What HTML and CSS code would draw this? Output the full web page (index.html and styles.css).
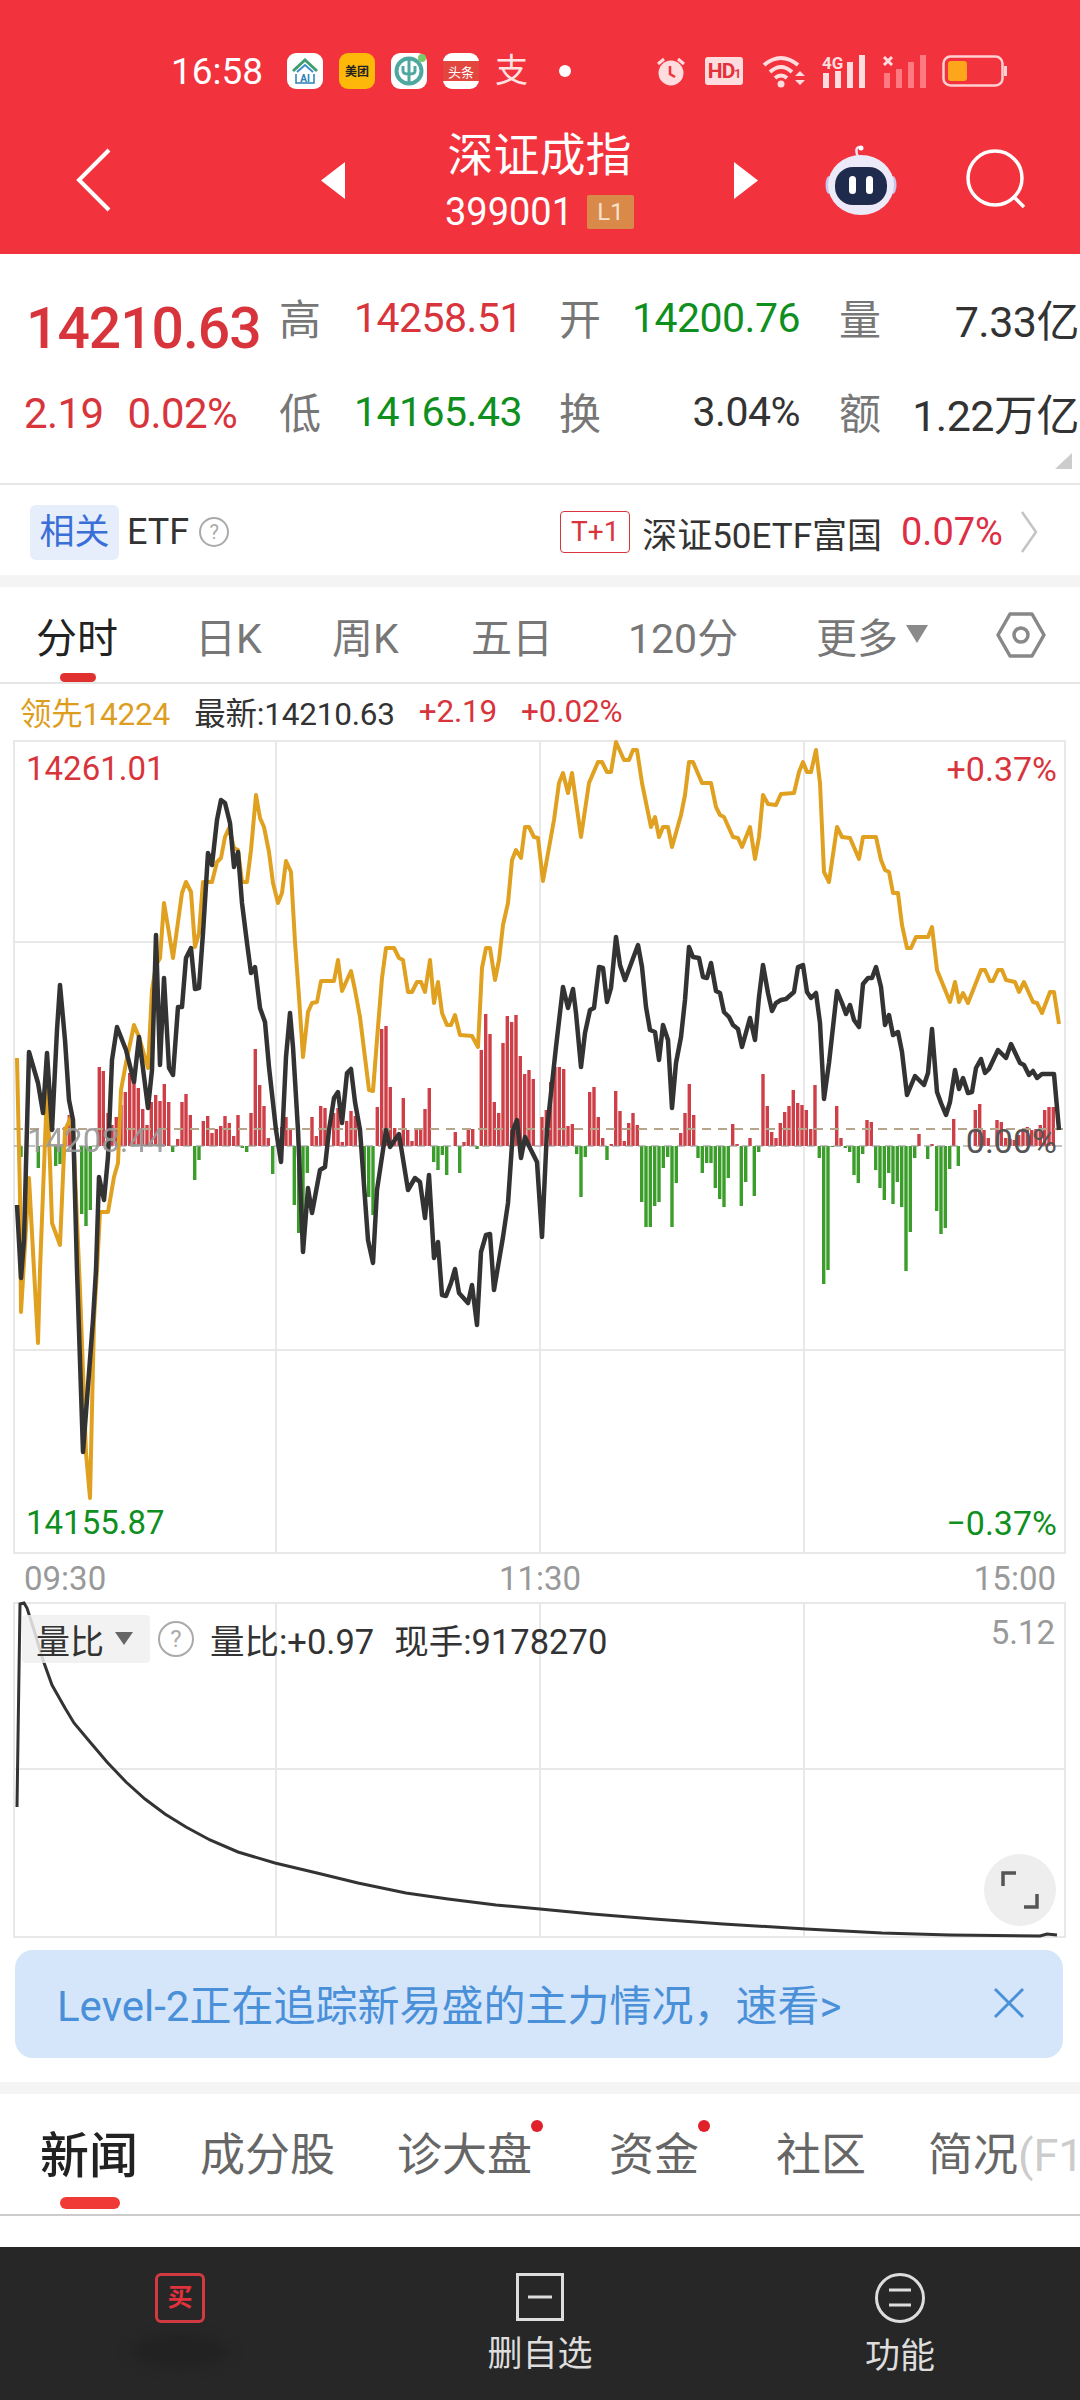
FILE: index.html
```html
<!DOCTYPE html>
<html lang="zh">
<head>
    <meta charset="UTF-8">
    <meta name="viewport" content="width=device-width, initial-scale=1.0">
    <title>深证成指</title>
    <link rel="stylesheet" href="styles.css">
</head>
<body>
    <!-- Cabecera roja -->
    <header class="top">
        <div class="status">
            <span class="clock">16:58</span>
            <div class="apps">
                <svg class="app" viewBox="0 0 36 36"><rect width="36" height="36" rx="9" fill="#fff"/><path d="M6 18 18 7l12 11" fill="none" stroke="#3f9e6e" stroke-width="3"/><path d="M10 19 18 12l8 7" fill="none" stroke="#3a8fc8" stroke-width="2"/><path d="M9 21v9h18v-9" fill="none" stroke="#2a80b8" stroke-width="1.5"/><text x="18" y="29" class="app-ai">AI</text></svg>
                <svg class="app" viewBox="0 0 36 36"><rect width="36" height="36" rx="9" fill="#fdb80a"/><text x="18" y="23" class="app-mt">美团</text></svg>
                <svg class="app" viewBox="0 0 36 36"><rect width="36" height="36" rx="9" fill="#fff"/><circle cx="18" cy="18" r="12.5" fill="none" stroke="#4fa8a0" stroke-width="4"/><path d="M18 6v24M12 13v5q0 3 6 3t6-3v-5" fill="none" stroke="#4fa8a0" stroke-width="3"/><circle cx="31" cy="5" r="4" fill="#7cc96a"/></svg>
                <svg class="app" viewBox="0 0 36 36"><rect width="36" height="36" rx="9" fill="#fff"/><rect y="8" width="36" height="20" fill="#e2473f"/><text x="18" y="24" class="app-tt">头条</text></svg>
                <span class="app-zfb">支</span>
                <i class="dot"></i>
            </div>
            <div class="sys">
                <svg width="32" height="32" viewBox="0 0 32 32"><circle cx="16" cy="18" r="12.5" fill="#ffdcdd"/><path d="M15 11v8l5 3" fill="none" stroke="#f2323c" stroke-width="2.5"/><path d="M3 9l6-5M29 9l-6-5" stroke="#ffdcdd" stroke-width="3"/></svg>
                <span class="hd">HD<small>1</small></span>
                <svg width="46" height="34" viewBox="0 0 46 34"><path d="M2 11Q19-3 36 11M8 18Q19 8 30 18M13 24Q19 19 25 24" fill="none" stroke="#ffdcdd" stroke-width="4"/><circle cx="19" cy="30" r="3.5" fill="#ffdcdd"/><path d="M33 22l5-5 5 5zM33 26l5 5 5-5z" fill="#ffdcdd"/></svg>
                <svg width="46" height="34" viewBox="0 0 46 34"><text x="0" y="15" class="sig-4g">4G</text><path d="M4 19v15M16 17v17M28 8v26M40 1v33" stroke="#ffdcdd" stroke-width="6"/></svg>
                <svg width="46" height="34" viewBox="0 0 46 34"><path d="M2 3l8 8M10 3l-8 8" stroke="#ffdcdd" stroke-width="3"/><path d="M5 19v15M17 15v19M29 8v26M41 1v33" stroke="#ff7a80" stroke-width="6"/></svg>
                <svg width="66" height="32" viewBox="0 0 66 32"><rect x="1.5" y="1.5" width="59" height="29" rx="7" fill="none" stroke="#ffd0d2" stroke-width="2.5"/><rect x="6" y="6" width="19" height="20" rx="3" fill="#fda51b"/><rect x="62" y="11" width="3" height="10" fill="#ffd0d2"/></svg>
            </div>
        </div>
        <nav class="bar">
            <div class="bar-left">
                <svg width="36" height="64" viewBox="0 0 36 64"><path d="M33 2 3 32l30 30" fill="none" stroke="#fff" stroke-width="4"/></svg>
            </div>
            <div class="bar-mid">
                <svg width="24" height="37" viewBox="0 0 24 37"><path d="M24 0v37L0 18.5z" fill="#fff"/></svg>
                <div class="name">
                    <div class="name-cn">深证成指</div>
                    <div class="name-code">399001 <span class="lv">L1</span></div>
                </div>
                <svg width="24" height="37" viewBox="0 0 24 37"><path d="M0 0v37l24-18.5z" fill="#fff"/></svg>
            </div>
            <div class="bar-right">
                <svg width="74" height="70" viewBox="0 0 74 70"><path d="M34 12Q30 2 36 2" fill="none" stroke="#e8e4f6" stroke-width="2.5"/><circle cx="37" cy="3" r="2.5" fill="#fff"/><ellipse cx="5" cy="40" rx="3.5" ry="9" fill="#c9c4ea"/><ellipse cx="69" cy="40" rx="3.5" ry="9" fill="#c9c4ea"/><ellipse cx="37" cy="40" rx="33" ry="30" fill="#ece9f8"/><rect x="11" y="22" width="52" height="38" rx="18" fill="#1f2b4d"/><rect x="25" y="31" width="7" height="18" rx="3.5" fill="#fff"/><rect x="42" y="31" width="7" height="18" rx="3.5" fill="#fff"/></svg>
                <svg width="62" height="62" viewBox="0 0 62 62"><circle cx="29" cy="29" r="27" fill="none" stroke="#fff" stroke-width="3.5"/><path d="M47 47l11 11" stroke="#fff" stroke-width="3.5"/></svg>
            </div>
        </nav>
    </header>

    <!-- Cotizacion -->
    <section class="quote">
        <div class="price up">14210.63</div>
        <div class="stat first"><span class="key">高</span><span class="val up">14258.51</span></div>
        <div class="stat"><span class="key">开</span><span class="val down">14200.76</span></div>
        <div class="stat"><span class="key">量</span><span class="val wide">7.33亿</span></div>
        <div class="change up"><span>2.19</span><span>0.02%</span></div>
        <div class="stat first"><span class="key">低</span><span class="val down">14165.43</span></div>
        <div class="stat"><span class="key">换</span><span class="val">3.04%</span></div>
        <div class="stat"><span class="key">额</span><span class="val wide">1.22万亿</span></div>
        <i class="corner"></i>
    </section>

    <section class="etf">
        <span class="etf-tag">相关</span>
        <span class="etf-name">ETF</span>
        <span class="help">?</span>
        <span class="t1">T+1</span>
        <span class="etf-fund">深证50ETF富国</span>
        <span class="etf-pct">0.07%</span>
        <svg width="18" height="44" viewBox="0 0 18 44"><path d="M2 2l14 20L2 42" fill="none" stroke="#c4c4c4" stroke-width="2.5"/></svg>
    </section>

    <div class="gap"></div>

    <!-- Pestañas del grafico -->
    <section class="periods">
        <span class="period on">分时</span>
        <span class="period p2">日K</span>
        <span class="period p3">周K</span>
        <span class="period p4">五日</span>
        <span class="period p5">120分</span>
        <span class="period p6">更多<i class="tri"></i></span>
        <svg class="hex" width="50" height="46" viewBox="0 0 50 46"><path d="M14 2h22l12 21-12 21H14L2 23z" fill="none" stroke="#888" stroke-width="3.5" stroke-linejoin="round"/><circle cx="25" cy="23" r="7" fill="none" stroke="#888" stroke-width="3.5"/></svg>
    </section>

    <div class="legend">
        <span class="lead">领先14224</span>
        <span class="last">最新:14210.63</span>
        <span class="up">+2.19</span>
        <span class="up">+0.02%</span>
    </div>

    <!-- Grafico de minutos -->
    <div class="chart">
        <svg class="plot" width="1080" height="820" viewBox="0 738 1080 820">
            <path class="grid" d="M14 741H1065V1553H14ZM276 741V1553M540 741V1553M804 741V1553M14 942H1065M14 1350H1065"/>
            <path class="bars-up" d="M65 1127V1146M69.3 1115V1146M73.3 1120V1146M99.3 1067V1146M103.3 1071V1146M108 1113V1146M112 1125V1146M116.3 1117V1146M121 1105V1146M125.3 1092V1146M129.7 1073V1146M134 1080V1146M138.3 1088V1146M142.7 1109V1146M147 1125V1146M151.3 1102V1146M155.7 1095V1146M160 1101V1146M164.3 1084V1146M168.7 1102V1146M177.7 1139V1146M182 1102V1146M186 1094V1146M190.3 1115V1146M203.3 1121V1146M207.7 1116V1146M212 1133V1146M216.3 1129V1146M220.7 1126V1146M225 1116V1146M229.3 1123V1146M233.7 1136V1146M238 1115V1146M251 1113V1146M255.3 1049V1146M259.7 1085V1146M264 1106V1146M268.3 1138V1146M281.7 1127V1146M286 1117V1146M290.3 1130V1146M312 1117V1146M316.3 1136V1146M320.7 1106V1146M325 1108V1146M333.7 1113V1146M338 1108V1146M342.3 1142V1146M346.7 1121V1146M351 1111V1146M355.3 1116V1146M377.3 1107V1146M381.7 1029V1146M386 1026V1146M390.3 1087V1146M394.7 1128V1146M399 1133V1146M403.3 1098V1146M407.7 1130V1146M412 1141V1146M416.3 1130V1146M420.7 1128V1146M425 1109V1146M429.3 1088V1146M455.3 1132V1146M464 1142V1146M468.3 1129V1146M472.7 1129V1146M481.3 1050V1146M485.7 1014V1146M490 1034V1146M494.3 1102V1146M498.7 1113V1146M503 1043V1146M507.3 1016V1146M511.7 1022V1146M516 1015V1146M520.3 1056V1146M524.7 1074V1146M529 1070V1146M533.3 1079V1146M542 1117V1146M546.3 1110V1146M550.7 1082V1146M555 1067V1146M559.3 1067V1146M563.7 1069V1146M568 1126V1146M572.3 1124V1146M589.7 1092V1146M594 1087V1146M598.3 1117V1146M602.7 1138V1146M611.3 1144V1146M615.7 1091V1146M620 1111V1146M624.3 1141V1146M628.7 1123V1146M633 1113V1146M637.3 1125V1146M680.7 1133V1146M685 1113V1146M689.3 1084V1146M693.7 1115V1146M732.7 1124V1146M737 1144V1146M750 1138V1146M763 1074V1146M767.3 1106V1146M771.7 1132V1146M776 1138V1146M780.3 1123V1146M784.7 1112V1146M789 1106V1146M793.3 1090V1146M797.7 1103V1146M802 1105V1146M806.3 1110V1146M810.7 1129V1146M815 1085V1146M836.7 1106V1146M841 1138V1146M867 1120V1146M871.3 1122V1146M919 1134V1146M932 1144V1146M953.7 1119V1146M975.3 1110V1146M979.7 1104V1146M984 1130V1146M988.3 1138V1146M997 1120V1146M1001.3 1122V1146M1005.7 1138V1146M1010 1139V1146M1014.3 1140V1146M1018.7 1135V1146M1023 1130V1146M1027.3 1127V1146M1031.7 1130V1146M1036 1129V1146M1040.3 1125V1146M1044.7 1110V1146M1049 1107V1146M1053.3 1107V1146"/>
            <path class="bars-down" d="M21 1146V1157M38.3 1146V1168M55.7 1146V1166M60 1146V1164M64.3 1146V1155M81.7 1146V1214M86 1146V1226M90.3 1146V1210M172.7 1146V1152M194.7 1146V1180M199 1146V1160M242.3 1146V1148M246.7 1146V1152M272.7 1146V1174M294.3 1146V1205M298.7 1146V1233M303 1146V1253M307.3 1146V1173M364.3 1146V1180M368.7 1146V1197M373 1146V1215M433.7 1146V1162M438 1146V1170M442.3 1146V1155M446.7 1146V1175M459.7 1146V1173M477 1146V1149M576.7 1146V1154M581 1146V1197M585.3 1146V1157M607 1146V1160M641.7 1146V1202M646 1146V1227M650.3 1146V1227M654.7 1146V1206M659 1146V1202M663.3 1146V1168M667.7 1146V1157M672 1146V1227M676.3 1146V1183M698 1146V1158M702.3 1146V1173M706.7 1146V1163M711 1146V1163M715.3 1146V1188M719.7 1146V1199M724 1146V1207M728.3 1146V1178M741.3 1146V1206M745.7 1146V1182M754.3 1146V1196M758.7 1146V1152M819.3 1146V1158M823.7 1146V1284M828 1146V1270M832.3 1146V1147M845.3 1146V1148M849.7 1146V1152M854 1146V1175M858.3 1146V1183M862.7 1146V1154M875.7 1146V1170M880 1146V1188M884.3 1146V1200M888.7 1146V1173M893 1146V1204M897.3 1146V1182M901.7 1146V1207M906 1146V1271M910.3 1146V1232M914.7 1146V1158M927.7 1146V1159M936.7 1146V1211M941 1146V1234M945.3 1146V1228M949.7 1146V1169M958.3 1146V1166"/>
            <path class="axis" d="M14 1146H1065"/>
            <path class="base" d="M14 1129H1065"/>
            <polyline class="line-lead" points="17,1058 20,1197 21,1312 29,1178 38,1343 40,1270 47,1090 50,1163 52,1223 60,1245 65,1130 71,1117 74,1150 80,1290 86,1453 90,1498 94,1320 97,1270 100,1212 108,1212 114,1177 118,1163 121,1090 126,1063 134,1025 139,1037 148,1068 152,990 156,965 160,958 164,903 169,933 173,958 182,893 186,882 191,892 195,947 199,933 203,882 212,882 217,862 221,858 225,837 229,828 234,848 238,850 242,882 247,882 251,850 256,795 260,818 264,827 269,852 273,883 278,903 282,893 286,861 291,872 295,942 299,997 303,1057 308,1012 312,1003 317,1002 321,981 334,981 338,960 342,991 351,971 355,990 360,1017 369,1090 373,1091 378,1027 382,978 386,948 394,948 399,958 403,960 408,992 412,992 417,982 421,982 425,992 430,960 434,1003 438,982 442,1013 447,1025 451,1025 455,1015 460,1035 472,1036 478,1047 482,968 486,948 490,948 495,980 499,960 503,925 508,903 512,860 516,850 521,858 525,827 529,827 534,837 538,838 543,881 554,820 559,783 563,773 568,793 572,773 581,837 589,783 598,762 602,762 607,772 611,772 616,742 624,760 629,760 633,750 637,750 642,783 651,827 655,817 659,837 663,827 668,827 672,847 681,815 685,795 689,762 693,762 702,783 711,783 716,807 720,815 724,817 733,837 738,838 742,847 750,827 755,859 759,837 763,795 768,804 776,805 781,794 794,793 799,772 803,762 807,772 811,772 816,750 820,783 824,872 829,882 837,827 842,837 850,838 859,859 863,837 876,837 881,860 885,870 889,872 893,893 898,893 902,925 907,948 911,948 916,937 928,937 932,927 937,970 950,1002 955,982 959,1002 963,993 968,1003 981,970 985,970 990,981 993,981 998,970 1002,970 1006,980 1015,982 1019,992 1024,982 1033,1002 1037,1003 1042,1013 1050,992 1054,992 1059,1024"/>
            <polyline class="line-price" points="17,1205 21,1278 24,1240 29,1052 38,1083 43,1113 47,1053 52,1130 57,1030 60,985 65,1040 69,1100 73,1120 77,1270 83,1452 93,1320 96,1270 99,1177 104,1200 108,1157 112,1060 117,1027 126,1050 134,1082 139,1037 148,1108 152,1070 156,935 160,1065 164,978 169,1068 173,1075 178,1007 182,1007 186,958 191,948 195,989 199,988 203,933 208,853 212,865 217,820 221,800 225,803 230,823 234,867 238,852 242,903 247,943 251,973 255,967 260,1008 265,1022 269,1067 276,1130 281,1162 286,1057 290,1013 293,1047 298,1130 303,1252 308,1188 312,1213 320,1170 325,1167 329,1130 334,1098 338,1092 342,1123 347,1073 351,1069 355,1102 360,1130 368,1240 373,1263 377,1190 386,1130 390,1147 399,1134 408,1190 415,1178 420,1182 425,1218 429,1175 434,1258 438,1242 442,1295 446,1296 451,1283 455,1269 459,1293 468,1303 472,1285 477,1325 481,1252 486,1235 490,1234 494,1290 503,1237 508,1203 513,1130 517,1120 521,1158 525,1137 530,1148 537,1162 542,1237 547,1130 556,1047 563,987 568,1008 573,989 576,1013 581,1067 585,1033 590,1010 594,1008 599,967 603,968 607,1002 611,988 616,937 620,965 625,980 638,945 642,967 646,1007 650,1030 655,1032 659,1060 663,1025 668,1040 672,1108 676,1063 681,1037 685,1000 689,947 693,957 699,958 703,977 707,978 711,963 716,991 720,993 724,1012 729,1017 733,1025 738,1029 742,1047 750,1018 755,1040 759,997 763,965 768,993 772,1011 776,1003 781,1000 786,999 794,992 798,967 803,965 807,992 811,998 816,993 820,1023 824,1099 829,1063 837,991 842,1003 846,1014 850,1005 854,1020 859,1027 863,984 868,978 872,978 876,967 881,987 885,1025 889,1015 893,1035 898,1032 902,1052 907,1095 915,1076 924,1085 928,1073 932,1029 937,1092 941,1103 946,1115 950,1102 955,1070 959,1089 963,1078 968,1093 972,1092 976,1068 981,1059 985,1073 989,1069 998,1050 1006,1058 1011,1044 1020,1063 1024,1065 1029,1075 1033,1071 1037,1078 1042,1074 1054,1074 1059,1130"/>
        </svg>
        <span class="chart-lbl tl up">14261.01</span>
        <span class="chart-lbl tr up">+0.37%</span>
        <span class="chart-lbl ml">14208.44</span>
        <span class="chart-lbl mr">0.00%</span>
        <span class="chart-lbl bl down">14155.87</span>
        <span class="chart-lbl br down">−0.37%</span>
    </div>

    <div class="times"><span>09:30</span><span>11:30</span><span>15:00</span></div>

    <!-- Grafico de volumen -->
    <div class="volume">
        <svg class="plot" width="1080" height="340" viewBox="0 1600 1080 340">
            <path class="grid" d="M14 1603H1065V1937H14ZM276 1603V1937M540 1603V1937M804 1603V1937M14 1769H1065"/>
            <polyline class="line-vol" points="17,1807 20,1604 24,1603 27,1608 34,1630 43,1660 52,1685 65,1708 74,1723 90,1742 107,1762 126,1782 145,1799 165,1814 186,1827 210,1840 238,1852 275,1863 317,1873 358,1883 406,1893 448,1899 496,1905 540,1909 592,1914 654,1919 723,1924 806,1929 882,1933 950,1935 1040,1936 1047,1934 1057,1935"/>
        </svg>
        <div class="vol-head">
            <span class="vol-chip">量比<i class="tri small"></i></span>
            <span class="help big">?</span>
            <span class="vol-text">量比:+0.97</span>
            <span class="vol-text">现手:9178270</span>
        </div>
        <span class="vol-max">5.12</span>
        <span class="expand"><svg width="38" height="38" viewBox="0 0 38 38"><path d="M2 15V2h13M36 23v13H23" fill="none" stroke="#555" stroke-width="3.5"/></svg></span>
    </div>

    <div class="banner">
        <span>Level-2正在追踪新易盛的主力情况，速看&gt;</span>
        <svg width="32" height="32" viewBox="0 0 32 32"><path d="M2 2l28 28M30 2 2 30" stroke="#4a90d9" stroke-width="3"/></svg>
    </div>

    <div class="gap gap2"></div>

    <!-- Pestañas de noticias -->
    <section class="news">
        <span class="news-tab on">新闻</span>
        <span class="news-tab">成分股</span>
        <span class="news-tab dotted">诊大盘</span>
        <span class="news-tab dotted">资金</span>
        <span class="news-tab">社区</span>
        <span class="news-tab fade">简况<em>(F1</em></span>
    </section>

    <div class="spacer"></div>

    <!-- Barra inferior -->
    <footer class="dock">
        <div class="dock-item">
            <span class="buy">买</span>
            <span class="smudge"></span>
        </div>
        <div class="dock-item">
            <svg width="48" height="48" viewBox="0 0 48 48"><rect x="1.5" y="1.5" width="45" height="45" fill="none" stroke="#ddd" stroke-width="3"/><path d="M12 24h24" stroke="#ddd" stroke-width="3"/></svg>
            <span class="dock-text">删自选</span>
        </div>
        <div class="dock-item">
            <svg width="50" height="50" viewBox="0 0 50 50"><circle cx="25" cy="25" r="23.5" fill="none" stroke="#ddd" stroke-width="3"/><path d="M14 17h22M14 32h22" stroke="#ddd" stroke-width="3"/></svg>
            <span class="dock-text">功能</span>
        </div>
    </footer>
</body>
</html>
```

FILE: styles.css
```css
/* General */
body {
    margin: 0;
    width: 1080px;
    height: 2400px;
    overflow: hidden;
    background-color: #fff;
    color: #333;
    font-family: Roboto, "Noto Sans CJK SC", sans-serif;
}

svg {
    display: block;
    flex: none;
}

.up {
    color: #d8343c;
}

.down {
    color: #0f8f1e;
}

/* Cabecera */
.top {
    height: 254px;
    background-color: #f2323c;
    color: #fff;
}

.status {
    display: flex;
    align-items: center;
    height: 70px;
    padding: 36px 0 0 171px;
}

.clock {
    width: 116px;
    font-size: 37px;
}

.apps {
    display: flex;
    align-items: center;
    gap: 16px;
    width: 368px;
}

.app {
    width: 36px;
    height: 36px;
}

.app-ai {
    font-size: 10px;
    font-weight: 700;
    text-anchor: middle;
    fill: #2a80b8;
}

.app-mt {
    font-size: 12px;
    font-weight: 700;
    text-anchor: middle;
    fill: #222;
}

.app-tt {
    font-size: 13px;
    text-anchor: middle;
    fill: #fff;
}

.app-zfb {
    width: 36px;
    font-size: 33px;
    line-height: 36px;
    color: #ffe2e2;
}

.dot {
    width: 12px;
    height: 12px;
    margin-left: 12px;
    border-radius: 50%;
    background-color: #fff;
}

.sys {
    display: flex;
    align-items: center;
    gap: 14px;
}

.hd {
    width: 38px;
    height: 28px;
    margin: 0 5px 0 4px;
    border-radius: 3px;
    background-color: #ffdcdd;
    color: #e2323c;
    font-size: 21px;
    font-weight: 700;
    line-height: 28px;
    text-align: center;
    letter-spacing: -1px;
}

.hd small {
    font-size: 12px;
}

.sig-4g {
    font-size: 17px;
    font-weight: 700;
    fill: #ffdcdd;
}

.bar {
    display: grid;
    grid-template-columns: 321px 437px 1fr;
    align-items: center;
    height: 148px;
}

.bar-left {
    padding-left: 76px;
}

.bar-mid {
    display: flex;
    align-items: center;
    justify-content: space-between;
}

.name {
    text-align: center;
}

.name-cn {
    font-size: 46px;
    line-height: 64px;
}

.name-code {
    display: flex;
    align-items: center;
    gap: 14px;
    font-size: 38px;
    line-height: 50px;
}

.lv {
    width: 47px;
    height: 34px;
    background-color: #d98a4a;
    color: #f7e3cc;
    font-size: 24px;
    line-height: 34px;
    border-radius: 2px;
}

.bar-right {
    display: flex;
    align-items: center;
    gap: 68px;
    padding-left: 66px;
}

/* Cotizacion */
.quote {
    position: relative;
    display: grid;
    grid-template-columns: 216px 239px 241px 240px;
    grid-auto-rows: 94px;
    column-gap: 39px;
    align-items: center;
    height: 231px;
    padding: 18px 0 0 26px;
    box-sizing: border-box;
    border-bottom: 2px solid #e6e6e6;
}

.price {
    padding-top: 18px;
    font-size: 57px;
    font-weight: 500;
    letter-spacing: -1px;
    white-space: nowrap;
}

.change {
    display: flex;
    gap: 24px;
    margin-left: -2px;
    font-size: 42px;
    letter-spacing: -0.6px;
    white-space: nowrap;
}

.stat {
    display: flex;
    align-items: center;
    justify-content: space-between;
}

.stat.first {
    margin: 0 -2px;
}

.key {
    margin-bottom: 5px;
    font-size: 42px;
    color: #777;
}

.val {
    position: relative;
    top: -1px;
    font-size: 41px;
    letter-spacing: -0.5px;
    white-space: nowrap;
}

.val.wide {
    font-size: 43px;
}

.corner {
    position: absolute;
    right: 8px;
    bottom: 14px;
    width: 0;
    height: 0;
    border-left: 17px solid transparent;
    border-bottom: 16px solid #ccc;
}

/* ETF */
.etf {
    display: flex;
    align-items: center;
    height: 90px;
    padding: 4px 0 0 30px;
    box-sizing: border-box;
}

.etf-tag {
    width: 89px;
    height: 55px;
    border-radius: 6px;
    background-color: #e6eefb;
    color: #3a6fd8;
    font-size: 35px;
    line-height: 55px;
    text-align: center;
}

.etf-name {
    margin-left: 8px;
    font-size: 36px;
}

.help {
    width: 26px;
    height: 26px;
    margin-left: 10px;
    border: 2px solid #aaa;
    border-radius: 50%;
    color: #aaa;
    font-size: 20px;
    line-height: 26px;
    text-align: center;
}

.t1 {
    width: 68px;
    height: 40px;
    margin-left: 331px;
    border: 1px solid #d8343c;
    border-radius: 4px;
    color: #d8343c;
    font-size: 28px;
    line-height: 40px;
    text-align: center;
}

.etf-fund {
    margin-left: 12px;
    font-size: 35px;
    white-space: nowrap;
}

.etf-pct {
    margin-left: 19px;
    color: #dc2f45;
    font-size: 38px;
}

.etf svg {
    margin-left: 17px;
}

.gap {
    height: 12px;
    background-color: #f4f4f4;
}

/* Periodos */
.periods {
    position: relative;
    display: flex;
    align-items: center;
    height: 95px;
    padding-left: 36px;
    border-bottom: 2px solid #e6e6e6;
}

.period {
    font-size: 41px;
    color: #777;
    white-space: nowrap;
}

.period.on {
    color: #222;
    width: 159px;
}

.p2 {
    width: 137px;
}

.p3 {
    width: 139px;
}

.p4 {
    width: 157px;
}

.p5 {
    width: 188px;
}

.p6 {
    display: flex;
    align-items: center;
    width: 180px;
}

.period.on::after {
    content: "";
    position: absolute;
    left: 60px;
    bottom: 0;
    width: 36px;
    height: 9px;
    border-radius: 5px;
    background-color: #e0302f;
}

.tri {
    width: 0;
    height: 0;
    margin: 0 0 2px 8px;
    border-left: 11px solid transparent;
    border-right: 11px solid transparent;
    border-top: 18px solid #8a8a8a;
}

.tri.small {
    margin-left: 11px;
    border-left-width: 9px;
    border-right-width: 9px;
    border-top-width: 13px;
    border-top-color: #666;
}

.legend {
    display: flex;
    align-items: center;
    gap: 24px;
    height: 54px;
    padding-left: 20px;
    font-size: 31.5px;
    white-space: nowrap;
    letter-spacing: -0.2px;
}

.lead {
    color: #dd9e1f;
}

.last {
    color: #333;
}

/* Graficos */
.chart {
    position: relative;
    height: 820px;
}

.plot {
    fill: none;
}

.grid {
    stroke: #e8e8e8;
    stroke-width: 2;
}

.bars-up {
    stroke: #cf3f47;
    stroke-width: 3.4;
}

.bars-down {
    stroke: #3c9e2a;
    stroke-width: 3.4;
}

.axis {
    stroke: #999;
    stroke-width: 2;
    stroke-dasharray: 8 5;
    opacity: 0.6;
}

.base {
    stroke: #b5a58a;
    stroke-width: 2;
    stroke-dasharray: 9 7;
}

.line-lead {
    stroke: #e0a020;
    stroke-width: 4;
    stroke-linejoin: round;
}

.line-price {
    stroke: #333;
    stroke-width: 4.5;
    stroke-linejoin: round;
}

.line-vol {
    stroke: #333;
    stroke-width: 3;
}

.chart-lbl {
    position: absolute;
    font-size: 33px;
    line-height: 40px;
    white-space: nowrap;
}

.tr,
.mr,
.br {
    font-size: 34px;
}

.tl {
    left: 26px;
    top: 11px;
}

.tr {
    right: 23px;
    top: 11px;
}

.ml {
    left: 27px;
    top: 383px;
    color: #999;
    opacity: 0.9;
}

.mr {
    right: 23px;
    top: 383px;
    color: #555;
}

.bl {
    left: 26px;
    top: 765px;
}

.br {
    right: 23px;
    top: 765px;
}

.times {
    display: flex;
    justify-content: space-between;
    height: 42px;
    padding: 0 24px;
    color: #999;
    font-size: 33px;
    line-height: 42px;
}

.volume {
    position: relative;
    height: 340px;
}

.vol-head {
    position: absolute;
    left: 22px;
    top: 14px;
    display: flex;
    align-items: center;
}

.vol-chip {
    display: flex;
    align-items: center;
    width: 114px;
    height: 48px;
    padding-left: 14px;
    border-radius: 4px;
    background-color: rgba(240, 240, 240, 0.85);
    font-size: 34px;
}

.help.big {
    width: 32px;
    height: 32px;
    line-height: 32px;
    font-size: 24px;
    margin: 0 16px 0 8px;
}

.vol-text {
    margin-right: 20px;
    font-size: 34.5px;
    white-space: nowrap;
}

.vol-max {
    position: absolute;
    right: 25px;
    top: 13px;
    color: #999;
    font-size: 33px;
    line-height: 40px;
}

.expand {
    position: absolute;
    left: 984px;
    top: 254px;
    display: flex;
    align-items: center;
    justify-content: center;
    width: 72px;
    height: 72px;
    border-radius: 50%;
    background-color: #eee;
}

/* Aviso */
.banner {
    display: flex;
    align-items: center;
    justify-content: space-between;
    height: 108px;
    margin: 10px 17px 24px 15px;
    padding: 0 38px 3px 42px;
    box-sizing: border-box;
    border-radius: 18px;
    background-color: #d6e6fa;
    color: #4a90d9;
    font-size: 42px;
    white-space: nowrap;
}

/* Noticias */
.news {
    display: flex;
    align-items: center;
    gap: 62px;
    height: 122px;
    padding: 0 0 5px 40px;
    box-sizing: border-box;
    overflow: hidden;
    border-bottom: 2px solid #ccc;
}

.news-tab {
    position: relative;
    flex: none;
    color: #666;
    font-size: 45px;
}

.news-tab.on {
    color: #222;
    font-size: 49px;
    font-weight: 500;
}

.news-tab.on::after {
    content: "";
    position: absolute;
    left: 20px;
    bottom: -22px;
    width: 60px;
    height: 12px;
    border-radius: 6px;
    background-color: #f03a35;
}

.dotted {
    margin-right: 15px;
}

.dotted::after {
    content: "";
    position: absolute;
    right: -11px;
    top: 1px;
    width: 12px;
    height: 12px;
    border-radius: 50%;
    background-color: #e0202a;
}

.fade em {
    font-style: normal;
    color: #ccc;
}

.spacer {
    height: 31px;
}

/* Barra inferior */
.dock {
    display: grid;
    grid-template-columns: 360px 360px 360px;
    height: 153px;
    padding-top: 26px;
    box-sizing: border-box;
    background-color: #272727;
    color: #ddd;
}

.dock-item {
    display: flex;
    flex-direction: column;
    align-items: center;
    gap: 12px;
}

.buy {
    width: 44px;
    height: 44px;
    border: 3px solid #d23a42;
    border-radius: 6px;
    color: #e0313c;
    font-size: 25px;
    font-weight: 700;
    line-height: 44px;
    text-align: center;
}

.smudge {
    width: 100px;
    height: 32px;
    border-radius: 50%;
    background-color: #222;
    filter: blur(6px);
}

.dock-text {
    font-size: 35px;
    line-height: 44px;
}
```
